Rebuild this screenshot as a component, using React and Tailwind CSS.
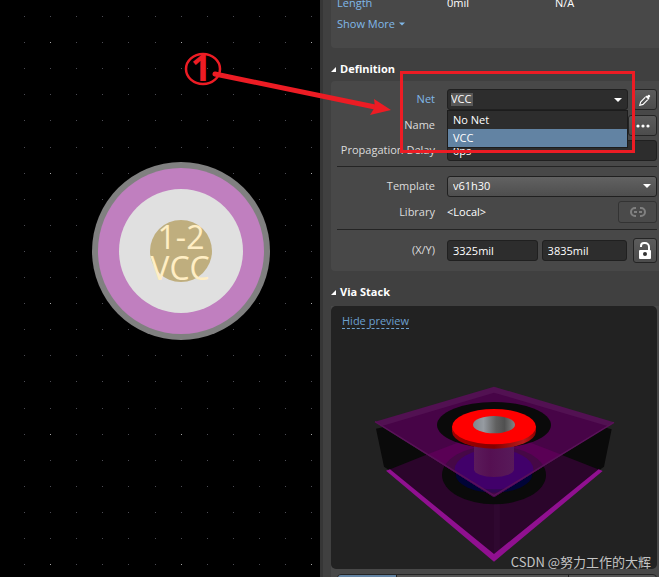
import React, { useState } from 'react';

const NETS = ['No Net', 'VCC'];
const GRID_STEP = 26.1;

const Caret = ({ className = '' }) => (
  <svg viewBox="0 0 8 4" className={`h-1 w-2 ${className}`} aria-hidden="true">
    <path d="M0 0h8L4 4z" fill="currentColor" />
  </svg>
);

const PipetteIcon = () => (
  <svg viewBox="0 0 12 12" className="size-3" aria-hidden="true">
    <path d="M6.4 3.2 1.6 8 .8 11.200 4 10.400 8.800 5.600" fill="none" stroke="currentColor" strokeWidth="1.100" />
    <path d="M8 2.200 9.200 1a1.300 1.300 0 0 1 1.800 1.800L9.800 4l.7.7-1 1L6.300 2.500l1-1z" fill="currentColor" />
  </svg>
);

const LinkIcon = () => (
  <svg viewBox="0 0 16 10" className="h-[10px] w-4" fill="none" stroke="currentColor" strokeWidth="2" aria-hidden="true">
    <path d="M6 1H5a4 4 0 0 0 0 8h1M10 1h1a4 4 0 0 1 0 8h-1" />
    <path d="M4 5h3M9 5h3" />
  </svg>
);

const UnlockIcon = () => (
  <svg viewBox="0 0 12 17" className="h-[17px] w-3" aria-hidden="true">
    <path d="M2 5V4a3 3 0 0 1 3-3h1a4 4 0 0 1 4 4v4" fill="none" stroke="currentColor" strokeWidth="2" />
    <rect x="0" y="8" width="12" height="9" rx="1" fill="currentColor" />
    <circle cx="6" cy="12" r="2" fill="#333" />
  </svg>
);

/** PCB canvas with the snap grid and the selected via. */
const BoardCanvas = () => {
  const dots = [];
  for (let row = 0; row < 22; row++) {
    for (let col = 0; col < 12; col++) {
      const major = row % 5 === 1 && col % 5 === 1;
      dots.push(
        <rect
          key={`${row}-${col}`}
          x={Math.round(24 + col * GRID_STEP)}
          y={Math.round(16 + row * GRID_STEP)}
          width="1"
          height="1"
          fill={major ? '#a8a8a8' : '#4c4c54'}
        />
      );
    }
  }

  return (
    <main className="overflow-hidden bg-black">
      <svg width="320" height="577" viewBox="0 0 320 577" className="block" role="img" aria-label="1-2 VCC">
        {dots}
        <circle cx="181" cy="251" r="89" fill="#808080" />
        <circle cx="181" cy="251" r="83" fill="#c07fbf" />
        <circle cx="181" cy="251" r="62" fill="#e0e0e0" />
        <circle cx="181" cy="251" r="31" fill="#bfae7e" />
        <g fill="#ffeec4" fontSize="32" textAnchor="middle" className="font-['Open_Sans','Noto_Sans',sans-serif]">
          <text x="181" y="249">1-2</text>
          <text x="180" y="280">VCC</text>
        </g>
      </svg>
    </main>
  );
};

const ViaPreview = () => (
  <svg viewBox="42 45 720 532" className="mx-auto block w-[240px] overflow-visible" role="img" aria-label="Via preview">
    <defs>
      <clipPath id="topPlane">
        <path d="M402 50 762 157 402 382 45 155z" />
      </clipPath>
      <linearGradient id="hole">
        <stop offset="0" stopColor="#80868c" />
        <stop offset=".25" stopColor="#969ba1" />
        <stop offset=".55" stopColor="#606060" />
        <stop offset=".75" stopColor="#505050" />
        <stop offset="1" stopColor="#858585" />
      </linearGradient>
      <linearGradient id="barrel">
        <stop offset="0" stopColor="#5b1b5b" />
        <stop offset=".4" stopColor="#551052" />
        <stop offset="1" stopColor="#581a5a" />
      </linearGradient>
      <linearGradient id="rim">
        <stop offset="0" stopColor="#a00000" />
        <stop offset=".5" stopColor="#840000" />
        <stop offset=".85" stopColor="#b51c1c" />
        <stop offset="1" stopColor="#900000" />
      </linearGradient>
    </defs>
    <path d="M48 176 68 172 402 382 733 172 755 178 732 290 715 302H90L72 290z" fill="#0a0a0a" />
    <path d="M205 252 85 300 402 560 720 300 598 252 402 382z" fill="#2b052b" />
    <path d="M402 380v176l18-14V372z" fill="#2f0830" />
    <ellipse cx="402" cy="315" rx="156" ry="88" fill="#0a0a0a" />
    <ellipse cx="402" cy="312" rx="115" ry="56" fill="#000437" />
    <path d="M402 50 762 157 402 382 45 155z" fill="#521152" />
    <path d="M402 68 742 168 402 378 66 168z" fill="#470447" />
    <g clipPath="url(#topPlane)">
      <path d="M402 176 605 254 402 382 199 254z" fill="#5a0055" />
      <ellipse cx="402" cy="315" rx="156" ry="88" fill="#460846" />
      <ellipse cx="402" cy="312" rx="115" ry="56" fill="#320752" />
      <ellipse cx="402" cy="298" rx="118" ry="60" fill="#41006a" />
    </g>
    <path d="M342 220h120v78a60 23 0 0 1-120 0z" fill="url(#barrel)" />
    <path d="M402 377 45 155M402 377 762 157" fill="none" stroke="#5a1259" strokeWidth="4" />
    <ellipse cx="402" cy="165" rx="171" ry="69" fill="#0a0a0a" />
    <path d="M342 216h120v30H342z" fill="url(#barrel)" />
    <path d="M276 170v14a126 52 0 0 0 252 0v-14z" fill="url(#rim)" />
    <ellipse cx="402" cy="170" rx="126" ry="53" fill="#f00" />
    <ellipse cx="402" cy="164" rx="63" ry="26" fill="url(#hole)" />
    <path d="M78 302 90 298 402 552 716 298 728 303 402 575z" fill="#901090" />
  </svg>
);

const SectionTitle = ({ children }) => (
  <h2 className="flex h-5 items-center gap-1 text-[11px] font-bold text-white">
    <svg viewBox="0 0 5 5" className="size-[5px]" aria-hidden="true">
      <path d="M5 0v5H0z" fill="currentColor" />
    </svg>
    {children}
  </h2>
);

const Row = ({ label, htmlFor, link, className = '', children }) => (
  <div className={`flex items-center gap-3 ${className}`}>
    <label htmlFor={htmlFor} className={`w-[98px] shrink-0 text-right whitespace-nowrap ${link ? 'text-[#80b8e8]' : 'text-[#dcdcdc]'}`}>
      {label}
    </label>
    <div className="flex min-w-0 flex-1 items-center">{children}</div>
  </div>
);

const fieldClass = 'h-[21px] min-w-0 rounded-[3px] border border-[#202020] bg-[#2d2d2d] px-[5px] text-white outline-none';
const buttonClass = 'flex shrink-0 items-center justify-center rounded-[3px] border border-[#242424] bg-linear-to-b from-[#5c5c5c] to-[#4c4c4c] text-white';

const NetCombo = ({ value, onChange }) => (
  <div className="relative min-w-0 flex-1">
    <div className="flex h-[21px] items-center justify-between rounded-[3px] border border-[#202020] bg-[#2d2d2d] px-[3px]">
      <input id="net" value={value} readOnly className="h-[13px] w-[22px] bg-[#585858] text-white outline-none" />
      <button type="button" aria-label="Open net list" className="px-[2px] text-white">
        <Caret />
      </button>
    </div>
    <ul role="listbox" aria-label="Net" className="absolute inset-x-0 top-full z-10 border border-[#1c1c1c] bg-[#2d2d2d] text-white">
      {NETS.map((net) => (
        <li
          key={net}
          role="option"
          aria-selected={net === value}
          onClick={() => onChange(net)}
          className={`h-[18px] px-[5px] leading-[18px] ${net === value ? 'bg-[#6283a3]' : ''}`}
        >
          {net}
        </li>
      ))}
    </ul>
  </div>
);

const PropertiesPanel = () => {
  const [net, setNet] = useState('VCC');

  return (
    <aside className="overflow-hidden border-l-3 border-[#363636] bg-[#404040] pl-2">
      {/* Tail of the net information card, scrolled under the top edge */}
      <section className="-mt-[7px] rounded-bl bg-[#484848] pb-[14px] pl-[6px]">
        <div className="flex h-5 items-center">
          <span className="w-[110px] text-[#80b8e8]">Length</span>
          <span className="w-[108px] text-white">0mil</span>
          <span className="text-white">N/A</span>
        </div>
        <button type="button" className="mt-px flex h-5 items-center gap-1 text-[#80b8e8]">
          Show More
          <Caret className="w-[6px]" />
        </button>
      </section>

      <div className="mt-[11px]">
        <SectionTitle>Definition</SectionTitle>
      </div>
      <section className="mt-[2px] rounded-l bg-[#484848] py-2 pr-[2px] pl-[6px]">
        <Row label="Net" htmlFor="net" link>
          <NetCombo value={net} onChange={setNet} />
          <button type="button" aria-label="Pick net" className={`${buttonClass} ml-[5px] h-[21px] w-6`}>
            <PipetteIcon />
          </button>
        </Row>
        <Row label="Name" htmlFor="name" className="mt-[5px]">
          <input id="name" className={`${fieldClass} flex-1`} />
          <button type="button" aria-label="More" className={`${buttonClass} h-[21px] w-[29px]`}>
            <svg viewBox="0 0 14 4" className="h-1 w-[14px]" fill="currentColor" aria-hidden="true">
              <circle cx="2" cy="2" r="1.6" />
              <circle cx="7" cy="2" r="1.6" />
              <circle cx="12" cy="2" r="1.6" />
            </svg>
          </button>
        </Row>
        <Row label="Propagation Delay" htmlFor="delay" className="mt-1">
          <input id="delay" defaultValue="0ps" className={`${fieldClass} flex-1`} />
        </Row>
        <hr className="mt-[5px] border-[#242424]" />
        <Row label="Template" htmlFor="template" className="mt-[9px]">
          <div className="relative flex-1">
            <select
              id="template"
              className="block h-[21px] w-full appearance-none rounded-[3px] border border-[#202020] bg-linear-to-b from-[#626262] to-[#4e4e4e] px-[5px] text-white outline-none"
            >
              <option>v61h30</option>
            </select>
            <Caret className="pointer-events-none absolute top-2 right-[6px] text-white" />
          </div>
        </Row>
        <Row label="Library" className="mt-1">
          <span className="flex-1 text-white">&lt;Local&gt;</span>
          <button type="button" disabled aria-label="Link to library" className="flex h-[22px] w-[39px] items-center justify-center rounded-[3px] border border-[#333] bg-[#4a4a4a] text-[#808080]">
            <LinkIcon />
          </button>
        </Row>
        <hr className="mt-[6px] border-[#242424]" />
        <Row label="(X/Y)" htmlFor="posX" className="mt-2">
          <input id="posX" defaultValue="3325mil" className={`${fieldClass} flex-[91]`} />
          <input aria-label="Y" defaultValue="3835mil" className={`${fieldClass} ml-1 flex-[85]`} />
          <button type="button" aria-label="Unlocked" className={`${buttonClass} ml-[6px] h-[25px] w-6`}>
            <UnlockIcon />
          </button>
        </Row>
      </section>

      <div className="mt-[11px]">
        <SectionTitle>Via Stack</SectionTitle>
      </div>
      <section className="mt-1 bg-[#484848] pr-[2px]">
        <div className="rounded-[5px] bg-[#222] px-[11px] pt-[7px] pb-[7px]">
          <a href="#preview" className="inline-block border-b border-dashed border-[#6ca0cf] leading-[15px] text-[#6ca0cf]">
            Hide preview
          </a>
          <div className="mt-[55px]">
            <ViaPreview />
          </div>
        </div>
        <div className="mt-[5px] ml-[6px] flex h-6 overflow-hidden rounded-t border border-[#242424] bg-[#555]">
          <button type="button" aria-label="Simple" className="w-[59px] border-r border-[#242424] bg-[#6283a3]" />
          <button type="button" aria-label="Top-Middle-Bottom" className="flex-1 border-r border-[#242424]" />
          <button type="button" aria-label="Full Stack" className="w-[87px]" />
        </div>
      </section>
    </aside>
  );
};

/** Numbered callout that points at the net selector. */
const Callout = () => (
  <>
    <svg width="400" height="130" viewBox="0 0 400 130" className="pointer-events-none absolute top-0 left-0 z-20" aria-hidden="true">
      <ellipse cx="203" cy="69" rx="17" ry="15" fill="none" stroke="#ed1c24" strokeWidth="2.5" />
      <text x="201" y="81" fontSize="36" fontWeight="700" textAnchor="middle" fill="#ed1c24" className="font-['Open_Sans',sans-serif]">1</text>
      <path d="M215 74 375 107" stroke="#ed1c24" strokeWidth="5" strokeLinecap="round" />
      <path d="M374 99 391 110 370 115 375 107z" fill="#ed1c24" />
    </svg>
    <div className="pointer-events-none absolute top-[71px] left-[400px] z-20 h-[82px] w-[235px] border-[3px] border-[#ed1c24]" />
  </>
);

const App = () => (
  <div className="relative grid h-screen grid-cols-[320fr_339fr] overflow-hidden bg-black font-['Open_Sans','Noto_Sans',sans-serif] text-[11px]">
    <BoardCanvas />
    <PropertiesPanel />
    <Callout />
    <p className="absolute right-2 bottom-[5px] font-['Noto_Sans_CJK_SC',sans-serif] text-[13px] leading-5 whitespace-nowrap text-[#c4c4c4]">
      CSDN @努力工作的大辉
    </p>
  </div>
);

export default App;
